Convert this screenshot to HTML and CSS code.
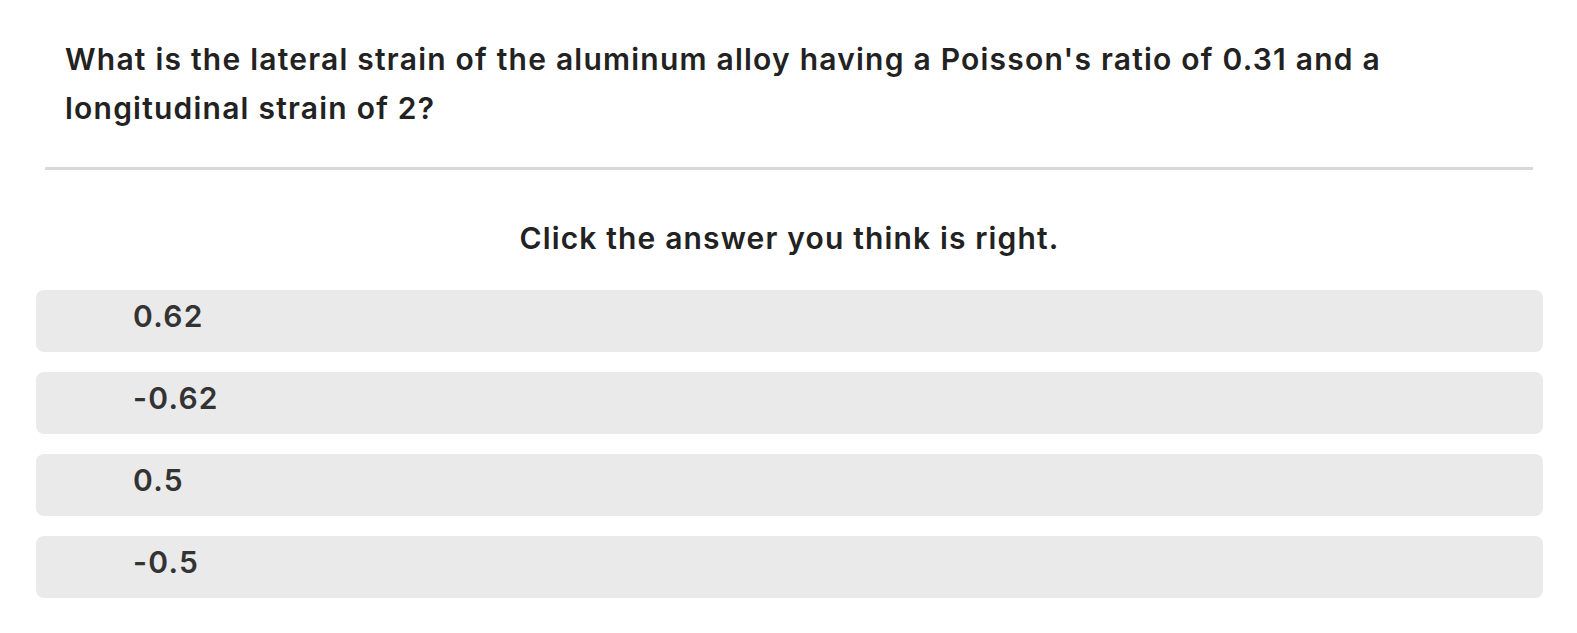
FILE: index.html
```html
<!DOCTYPE html>
<html>
<head>
<meta charset="utf-8">
<link rel="stylesheet" href="styles.css">
</head>
<body>
<main class="page">
  <h1 class="question">What is the lateral strain of the aluminum alloy having a Poisson's ratio of 0.31 and a longitudinal strain of 2?</h1>
  <hr class="divider">
  <p class="prompt">Click the answer you think is right.</p>
  <ul class="answers">
    <li class="answer">0.62</li>
    <li class="answer">-0.62</li>
    <li class="answer">0.5</li>
    <li class="answer">-0.5</li>
  </ul>
</main>
</body>
</html>
```
FILE: styles.css
```css
html, body {
  margin: 0;
  background: #ffffff;
}
.page {
  font-family: "Inter", "Open Sans", sans-serif;
  color: #222222;
  padding: 35px 34px 0 36px;
}
.question {
  margin: 0;
  padding: 0 100px 0 29px;
  font-size: 30px;
  font-weight: 600;
  letter-spacing: 1.22px;
  line-height: 49px;
}
.divider {
  border: 0;
  height: 3px;
  background: #d8d8d8;
  margin: 34px 10px 0 9px;
}
.prompt {
  margin: 48px 0 0;
  text-align: center;
  font-size: 30px;
  font-weight: 600;
  letter-spacing: 1.15px;
  line-height: 40px;
}
.answers {
  list-style: none;
  margin: 32px 0 0;
  padding: 0;
  display: flex;
  flex-direction: column;
  gap: 20px;
}
.answer {
  background: #ebeaea;
  border-radius: 8px;
  height: 62px;
  display: flex;
  align-items: center;
  padding: 0 0 10px 97px;
  font-size: 30px;
  font-weight: 600;
  letter-spacing: 1.25px;
  color: #333333;
  box-sizing: border-box;
}
```
